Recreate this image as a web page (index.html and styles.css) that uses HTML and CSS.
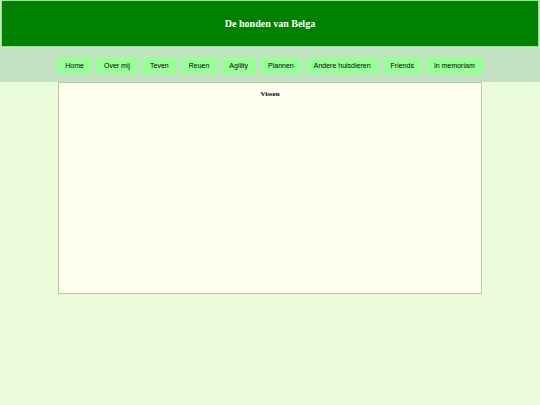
FILE: index.html
```html
<!DOCTYPE html>
<html>
<head>
<meta charset="utf-8">
<link rel="stylesheet" href="styles.css">
</head>
<body>
<header class="top">
  <h1 class="title">De honden van Belga</h1>
</header>
<nav class="nav">
  <a class="btn">Home</a>
  <a class="btn">Over mij</a>
  <a class="btn">Teven</a>
  <a class="btn">Reuen</a>
  <a class="btn">Agility</a>
  <a class="btn">Plannen</a>
  <a class="btn">Andere huisdieren</a>
  <a class="btn">Friends</a>
  <a class="btn">In memoriam</a>
</nav>
<main class="content">
  <h2 class="heading">Vissen</h2>
</main>
</body>
</html>
```
FILE: styles.css
```css
html, body {
  margin: 0;
  padding: 0;
}
body {
  background: #ebfddc;
  font-family: "Liberation Sans", Arial, sans-serif;
  height: 405px;
}
.top {
  background: #008000;
  border: 1px solid #9ee29e;
  margin: 0 1px;
  height: 45px;
  display: flex;
  align-items: center;
  justify-content: center;
  box-shadow: 0 0 0 1px #c4e6c4;
}
.title {
  margin: 0;
  color: #ffffff;
  font-family: "Liberation Serif", "Times New Roman", serif;
  font-weight: bold;
  font-size: 10px;
}
.nav {
  background: #c2e0c2;
  margin-top: 1px;
  height: 34px;
  display: flex;
  align-items: center;
  justify-content: center;
  gap: 4px;
}
.btn {
  background: #99ff99;
  color: #000000;
  font-size: 7px;
  height: 17px;
  line-height: 17px;
  padding: 0 8px;
  text-decoration: none;
}
.content {
  background: #fffff0;
  border: 1px solid #c8c8a0;
  width: 422px;
  height: 210px;
  margin: 0 auto;
}
.heading {
  margin: 7px 0 0 0;
  text-align: center;
  font-family: "Liberation Serif", "Times New Roman", serif;
  font-weight: bold;
  font-size: 7px;
}
```
